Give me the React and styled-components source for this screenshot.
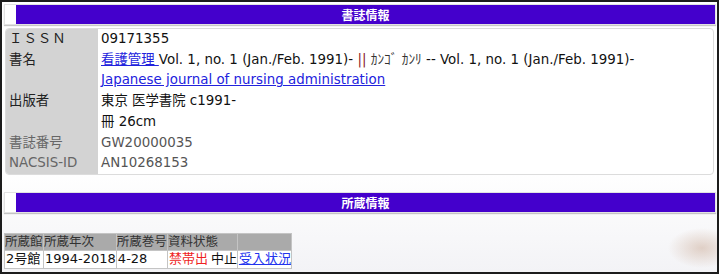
import styled, { createGlobalStyle } from "styled-components";

const GlobalStyle = createGlobalStyle`
  body {
    margin: 0;
    background: #fff;
    font-family: "DejaVu Sans", "Noto Sans CJK JP", sans-serif;
  }
`;

const Frame = styled.div`
  box-sizing: border-box;
  width: 719px;
  height: 274px;
  border: 2px solid #1c1c1c;
  overflow: hidden;
  background:
    radial-gradient(ellipse 34px 20px at 700px 246px, rgba(196, 160, 136, 0.45), rgba(255, 255, 255, 0)),
    linear-gradient(180deg, #ffffff 0%, #ffffff 62%, #f3f3f6 100%);
`;

const HeaderBox = styled.div`
  margin: ${(p) => p.$top}px 1px 0 2px;
  padding-left: 11px;
  border: 1px solid #e2e2e2;
  box-shadow: 0 1px 1px rgba(0, 0, 0, 0.22);
  background: #fff;
`;

const HeaderBar = styled.div`
  height: 19px;
  line-height: 19px;
  background: #4400cc;
  color: #fff;
  font-family: "Noto Sans CJK JP", sans-serif;
  font-weight: 700;
  font-size: 12px;
  text-align: center;
`;

const Card = styled.div`
  margin: 3px 3px 0 3px;
  border: 1px solid #dcdcdc;
  border-radius: 4px;
  overflow: hidden;
  background: #fff;
  display: grid;
  grid-template-columns: 92px 1fr;
  font-size: 13.4px;
  line-height: 20.7px;
`;

const Label = styled.div`
  background: #d3d3d3;
  padding-left: 3px;
  color: ${(p) => (p.$muted ? "#666" : "#222")};
  letter-spacing: ${(p) => (p.$spaced ? "1px" : "0")};
`;

const Value = styled.div`
  padding-left: 3px;
  color: ${(p) => (p.$muted ? "#555" : "#111")};
  white-space: nowrap;
`;

const TitleLink = styled.a`
  color: #2222dd;
  text-decoration: underline;
`;

const Bars = styled.span`
  color: #8b1a2a;
`;

const Kana = styled.span`
  color: #333;
`;

const HoldTable = styled.table`
  margin: 20px 0 0 2px;
  border-collapse: collapse;
  font-size: 12.5px;
  line-height: 16.5px;
`;

const Th = styled.th`
  width: ${(p) => p.$w}px;
  padding: 0;
  background: #aaaaaa;
  border: 1px solid #c4c4c4;
  color: #333;
  font-weight: 400;
  text-align: left;
  white-space: nowrap;
`;

const Td = styled.td`
  padding: 0 0 0 1px;
  background: #fff;
  border: 1px solid #c4c4c4;
  color: #111;
  font-size: 13px;
  white-space: nowrap;
`;

const Forbidden = styled.span`
  color: #ee2222;
  margin-right: 3px;
`;

const StatusLink = styled.a`
  color: #2233ee;
  text-decoration: underline;
`;

const columns = [
  { name: "所蔵館", w: 38 },
  { name: "所蔵年次", w: 70 },
  { name: "所蔵巻号", w: 50 },
  { name: "資料状態", w: 67 },
  { name: "", w: 51 },
];

export default function App() {
  return (
    <>
      <GlobalStyle />
      <Frame>
        <HeaderBox $top={2}>
          <HeaderBar>書誌情報</HeaderBar>
        </HeaderBox>
        <Card>
          <Label $spaced>ＩＳＳＮ</Label>
          <Value>09171355</Value>

          <Label>書名</Label>
          <Value>
            <TitleLink href="#">看護管理 </TitleLink>Vol. 1, no. 1 (Jan./Feb. 1991)- <Bars>||</Bars>{" "}
            <Kana>ｶﾝｺﾞ ｶﾝﾘ</Kana> -- Vol. 1, no. 1 (Jan./Feb. 1991)-
            <br />
            <TitleLink href="#">Japanese journal of nursing administration</TitleLink>
          </Value>

          <Label>出版者</Label>
          <Value>
            東京 医学書院 c1991-
            <br />冊 26cm
          </Value>

          <Label $muted>書誌番号</Label>
          <Value $muted>GW20000035</Value>

          <Label $muted>NACSIS-ID</Label>
          <Value $muted>AN10268153</Value>
        </Card>

        <HeaderBox $top={17}>
          <HeaderBar>所蔵情報</HeaderBar>
        </HeaderBox>

        <HoldTable>
          <thead>
            <tr>
              {columns.map((c) => (
                <Th key={c.w + c.name} $w={c.w}>
                  {c.name}
                </Th>
              ))}
            </tr>
          </thead>
          <tbody>
            <tr>
              <Td>2号館</Td>
              <Td>1994-2018</Td>
              <Td>4-28</Td>
              <Td>
                <Forbidden>禁帯出</Forbidden>中止
              </Td>
              <Td>
                <StatusLink href="#">受入状況</StatusLink>
              </Td>
            </tr>
          </tbody>
        </HoldTable>
      </Frame>
    </>
  );
}
